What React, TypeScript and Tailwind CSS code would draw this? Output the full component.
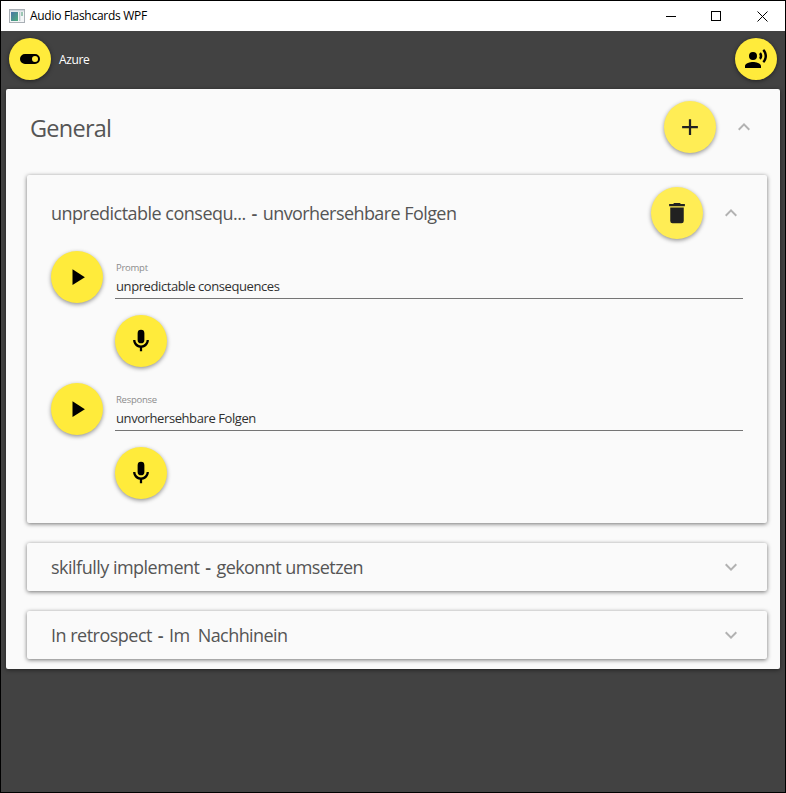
import React from 'react';

const paths = {
  toggle:
    'M17,7H7A5,5 0 0,0 2,12A5,5 0 0,0 7,17H17A5,5 0 0,0 22,12A5,5 0 0,0 17,7M17,15A3,3 0 0,1 14,12A3,3 0 0,1 17,9A3,3 0 0,1 20,12A3,3 0 0,1 17,15Z',
  voice:
    'M9,5A4,4 0 0,1 13,9A4,4 0 0,1 9,13A4,4 0 0,1 5,9A4,4 0 0,1 9,5M9,15C11.67,15 17,16.34 17,19V21H1V19C1,16.34 6.33,15 9,15M16.76,5.36C18.78,7.56 18.78,10.61 16.76,12.63L15.08,10.94C15.92,9.76 15.92,8.23 15.08,7.05L16.76,5.36M20.07,2C24,6.05 23.97,12.11 20.07,16L18.44,14.37C21.21,11.19 21.21,6.65 18.44,3.63L20.07,2Z',
  plus: 'M19,13H13V19H11V13H5V11H11V5H13V11H19V13Z',
  trash: 'M19,4H15.5L14.5,3H9.5L8.5,4H5V6H19M6,19A2,2 0 0,0 8,21H16A2,2 0 0,0 18,19V7H6V19Z',
  play: 'M8,5.14V19.14L19,12.14L8,5.14Z',
  mic: 'M12,2A3,3 0 0,1 15,5V11A3,3 0 0,1 12,14A3,3 0 0,1 9,11V5A3,3 0 0,1 12,2M19,11C19,14.53 16.39,17.44 13,17.93V21H11V17.93C7.61,17.44 5,14.53 5,11H7A5,5 0 0,0 12,16A5,5 0 0,0 17,11H19Z',
  up: 'M7.41,15.41L12,10.83L16.59,15.41L18,14L12,8L6,14L7.41,15.41Z',
  down: 'M7.41,8.59L12,13.17L16.59,8.59L18,10L12,16L6,10L7.41,8.59Z',
};

type IconName = keyof typeof paths;

function Icon({ name, className }: { name: IconName; className: string }) {
  return (
    <svg viewBox="0 0 24 24" fill="currentColor" className={`shrink-0 ${className}`}>
      <path d={paths[name]} />
    </svg>
  );
}

function SmallFab({ name }: { name: IconName }) {
  return (
    <button className="flex size-[42px] shrink-0 items-center justify-center rounded-full bg-[#ffeb3b] text-black shadow-[0_1px_4px_rgba(0,0,0,0.5)]">
      <Icon name={name} className="size-6" />
    </button>
  );
}

function Fab({ name, soft = false }: { name: IconName; soft?: boolean }) {
  return (
    <button
      className={`flex size-[52px] shrink-0 items-center justify-center rounded-full shadow-[0_1.5px_4px_rgba(0,0,0,0.42)] ${
        soft ? 'bg-[#ffed55] text-[#212121]' : 'bg-[#ffeb3b] text-black'
      }`}
    >
      <Icon name={name} className="size-7 p-[0.5px]" />
    </button>
  );
}

function Field({ label, value }: { label: string; value: string }) {
  return (
    <>
      <div className="flex gap-3">
        <Fab name="play" />
        <div className="flex h-12 grow flex-col border-b border-[#757575] pl-px">
          <span className="mt-[11px] self-start whitespace-nowrap text-[9.5px] leading-3 tracking-[-0.25px] text-[#8c8c8c]">{label}</span>
          <span className="mt-[3px] self-start whitespace-nowrap text-[13px] leading-[18px] tracking-[-0.41px] text-[#303030]">{value}</span>
        </div>
      </div>
      <div className="mt-3 pl-16">
        <Fab name="mic" />
      </div>
    </>
  );
}

function Title({ front, back }: { front: string; back: string }) {
  return (
    <span className="whitespace-pre text-[18px] leading-6 tracking-[-0.51px] text-[#555555]">
      {front} <span className="mx-[1.7px] font-semibold">-</span> <span className="tracking-[-0.57px]">{back}</span>
    </span>
  );
}

const card = 'rounded-[2px] bg-[#fafafa] shadow-[0_1px_4px_rgba(0,0,0,0.55)]';

export default function App() {
  return (
    <div className="flex h-[793px] w-[786px] flex-col overflow-hidden border border-black bg-[#424242] font-['Open_Sans','Noto_Sans',sans-serif]">
      <header className="flex h-[30px] shrink-0 items-center bg-white pl-2">
        <svg width="16" height="14" viewBox="0 0 16 14" className="shrink-0">
          <defs>
            <linearGradient id="pane" x1="0" y1="0" x2="1" y2="1">
              <stop offset="0" stopColor="#4a75a6" />
              <stop offset="1" stopColor="#4fae7c" />
            </linearGradient>
          </defs>
          <rect x="0.5" y="0.5" width="15" height="13" fill="#f4f6f7" stroke="#a9afb5" />
          <rect x="1" y="1" width="14" height="1.4" fill="#cdd4db" />
          <rect x="2" y="3" width="7" height="9" fill="url(#pane)" />
          <rect x="10" y="3" width="1.4" height="9" fill="#c3cbd1" />
          <rect x="12" y="3" width="2" height="4" fill="#9cc7b4" />
        </svg>
        <span className="ml-[5px] whitespace-nowrap text-[12px] leading-4 tracking-[-0.29px] text-black">Audio Flashcards WPF</span>
        <svg width="102" height="11" viewBox="0 0 102 11" fill="none" stroke="black" className="ml-auto mr-[17px] shrink-0" shapeRendering="crispEdges">
          <path d="M0 5.5H10" />
          <rect x="45.5" y="0.5" width="9" height="9" />
          <path d="M91.5 0.5L101.5 10.5M101.5 0.5L91.5 10.5" shapeRendering="auto" />
        </svg>
      </header>

      <div className="flex h-[58px] shrink-0 items-center px-2 pb-[2px]">
        <SmallFab name="toggle" />
        <span className="ml-2 mt-[2px] whitespace-nowrap text-[12px] leading-4 tracking-[-0.35px] text-white">Azure</span>
        <div className="ml-auto flex">
          <SmallFab name="voice" />
        </div>
      </div>

      <main className="mx-[5px] h-[580px] shrink-0 rounded-[2px] bg-[#fafafa] pl-[21px] pr-[13px] shadow-[0_1px_4px_rgba(0,0,0,0.5)]">
        <div className="flex h-[76px] items-center pl-[3px] pr-[11px]">
          <span className="mt-[2px] whitespace-nowrap text-[23.5px] leading-8 tracking-[-0.75px] text-[#555555]">General</span>
          <div className="ml-auto flex items-center gap-4">
            <Fab name="plus" soft />
            <Icon name="up" className="size-6 text-[#b2b2b2]" />
          </div>
        </div>

        <div className="mt-[10px] flex flex-col gap-5">
          <section className={`h-[348px] px-6 ${card}`}>
            <div className="flex h-[76px] items-center justify-between">
              <Title front="unpredictable consequ..." back="unvorhersehbare Folgen" />
              <div className="flex items-center gap-4">
                <Fab name="trash" soft />
                <Icon name="up" className="size-6 text-[#b2b2b2]" />
              </div>
            </div>
            <Field label="Prompt" value="unpredictable consequences" />
            <div className="mt-4">
              <Field label="Response" value="unvorhersehbare Folgen" />
            </div>
          </section>
          <section className={`flex h-12 items-center justify-between px-6 ${card}`}>
            <Title front="skilfully implement" back="gekonnt umsetzen" />
            <Icon name="down" className="size-6 text-[#b2b2b2]" />
          </section>
          <section className={`flex h-12 items-center justify-between px-6 ${card}`}>
            <Title front="In retrospect" back="Im  Nachhinein" />
            <Icon name="down" className="size-6 text-[#b2b2b2]" />
          </section>
        </div>
      </main>
    </div>
  );
}
